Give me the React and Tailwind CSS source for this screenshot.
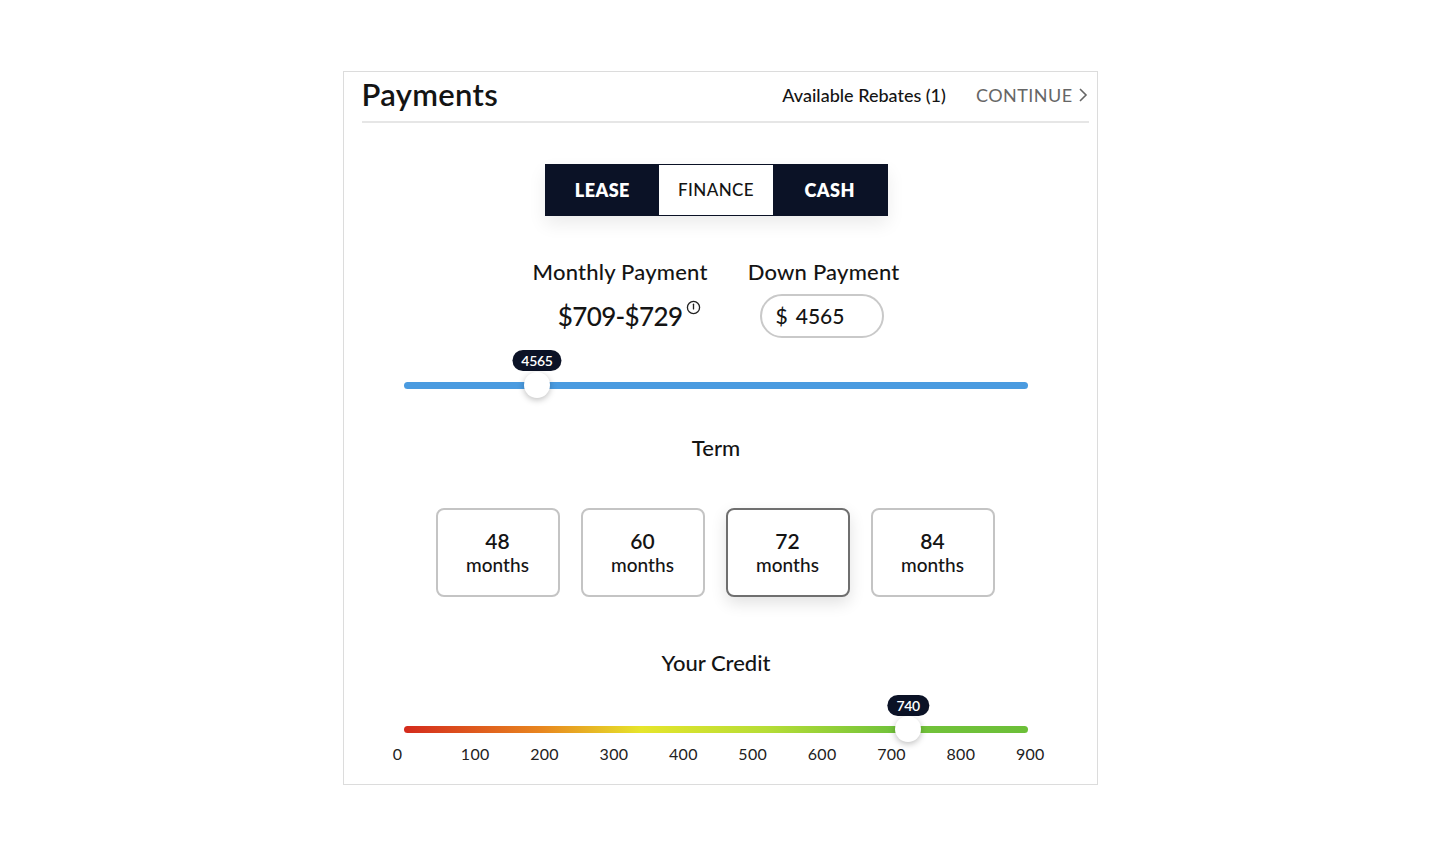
import React, { useState } from "react";

const font = { fontFamily: "Lato, 'Open Sans', sans-serif" };

const creditLabels = ["100", "200", "300", "400", "500", "600", "700", "800", "900"];

function Tooltip({ children }) {
  return (
    <div className="absolute top-0 -translate-x-1/2 rounded-full bg-[#0b1226] px-[9px] h-[21px] flex items-center text-[14px] font-semibold text-white tracking-tight">
      {children}
    </div>
  );
}

function Thumb() {
  return (
    <div className="absolute -translate-x-1/2 w-[26px] h-[26px] rounded-full bg-white shadow-[0_2px_6px_rgba(0,0,0,0.25)]" />
  );
}

export default function App() {
  const [mode, setMode] = useState("FINANCE");
  const [term, setTerm] = useState(72);
  const downPct = 21.3;
  const creditPct = 80.8;

  return (
    <div className="min-h-screen bg-white pt-[71px]" style={font}>
      <div className="mx-auto w-[755px] h-[714px] border border-[#dcdcdc] bg-white text-[#111]">
        {/* Header */}
        <div className="ml-[18px] mr-[8px] h-[51px] pb-[5px] flex items-center justify-between border-b-2 border-[#e6e6e6]">
          <h1 className="text-[31px] font-semibold text-[#141414] tracking-[0.01em]">Payments</h1>
          <div className="flex items-center gap-[30px] pt-[2px]">
            <span className="text-[18px] font-medium text-[#141414]">Available Rebates (1)</span>
            <span className="flex items-center gap-1 text-[18px] text-[#666] tracking-wide">
              CONTINUE
              <svg width="12" height="18" viewBox="0 0 12 18" fill="none" stroke="#666" strokeWidth="1.6">
                <path d="M3 3l6 6-6 6" />
              </svg>
            </span>
          </div>
        </div>

        <div className="pr-[8px]">
          {/* Tabs */}
          <div className="mt-[41px] mx-auto w-[343px] h-[52px] flex bg-[#0b1226] border border-[#0b1226] shadow-[0_8px_18px_rgba(0,0,0,0.08)]">
            {["LEASE", "FINANCE", "CASH"].map((m) => (
              <button
                key={m}
                onClick={() => setMode(m)}
                className={
                  m === mode
                    ? "flex-1 bg-white text-[#141414] text-[17px] font-medium tracking-wide"
                    : "flex-1 text-white text-[18px] font-extrabold tracking-wide"
                }
              >
                {m}
              </button>
            ))}
          </div>

          {/* Payments */}
          <div className="mt-[42px] flex justify-center gap-[40px]">
            <div className="flex flex-col items-center">
              <div className="text-[22px] leading-[28px] font-medium text-[#141414] tracking-[0.01em]">Monthly Payment</div>
              <div className="mt-[8px] h-[44px] flex items-center">
                <span className="relative text-[26px] font-medium text-[#141414] tracking-tight">
                  $709-$729
                  <svg className="absolute -right-[19px] top-[3px]" width="15" height="15" viewBox="0 0 16 16" fill="none" stroke="#222" strokeWidth="1.4">
                    <circle cx="8" cy="8" r="6.5" />
                    <path d="M8 4.5v5" strokeLinecap="round" />
                  </svg>
                </span>
              </div>
            </div>
            <div className="flex flex-col items-center">
              <div className="text-[22px] leading-[28px] font-medium text-[#141414] tracking-[0.01em]">Down Payment</div>
              <div className="mt-[8px] mr-[4px] w-[124px] h-[44px] rounded-full border-2 border-[#c9c9c9] flex items-center px-[14px] text-[21px] font-medium text-[#141414] gap-[8px]">
                <span>$</span>
                <span>4565</span>
              </div>
            </div>
          </div>

          {/* Down payment slider */}
          <div className="mt-[12px] mx-auto w-[624px] h-[50px] relative">
            <div className="absolute" style={{ left: `${downPct}%` }}>
              <Tooltip>4565</Tooltip>
            </div>
            <div className="absolute top-[32px] left-0 right-0 h-[7px] rounded-full bg-[#4a9be0]" />
            <div className="absolute top-[22px]" style={{ left: `${downPct}%` }}>
              <Thumb />
            </div>
          </div>

          {/* Term */}
          <div className="mt-[34px] text-center text-[22px] leading-[28px] font-medium text-[#141414]">Term</div>
          <div className="mt-[46px] flex justify-center gap-[21px] pr-[2px]">
            {[48, 60, 72, 84].map((t) => (
              <button
                key={t}
                onClick={() => setTerm(t)}
                className={
                  t === term
                    ? "w-[124px] h-[89px] rounded-[8px] border-2 border-[#6f6f6f] bg-white shadow-[0_6px_16px_rgba(0,0,0,0.12)] flex flex-col items-center justify-center text-[#141414]"
                    : "w-[124px] h-[89px] rounded-[8px] border-2 border-[#c4c4c4] bg-white flex flex-col items-center justify-center text-[#141414]"
                }
              >
                <span className="text-[21px] leading-[24px] font-semibold">{t}</span>
                <span className="text-[19px] leading-[24px] font-medium">months</span>
              </button>
            ))}
          </div>

          {/* Credit */}
          <div className="mt-[52px] text-center text-[22px] leading-[28px] font-medium text-[#141414]">Your Credit</div>
          <div className="mt-[18px] mx-auto w-[624px] h-[44px] relative">
            <div className="absolute" style={{ left: `${creditPct}%` }}>
              <Tooltip>740</Tooltip>
            </div>
            <div className="absolute top-[31px] left-0 right-0 h-[7px] rounded-full bg-[linear-gradient(90deg,#d42a1c_0%,#e8861f_22%,#e6e52b_38%,#b6dd36_58%,#73c33a_78%,#6cbf38_100%)]" />
            <div className="absolute top-[21px]" style={{ left: `${creditPct}%` }}>
              <Thumb />
            </div>
          </div>
          <div className="mt-[5px] ml-[47px] flex text-[16px] leading-[20px] text-[#222] tracking-[0.02em]">
            <span className="w-[14px] text-center">0</span>
            <div className="ml-[36px] flex">
              {creditLabels.map((l) => (
                <span key={l} className="w-[69.4px] text-center">{l}</span>
              ))}
            </div>
          </div>
        </div>
      </div>
    </div>
  );
}
